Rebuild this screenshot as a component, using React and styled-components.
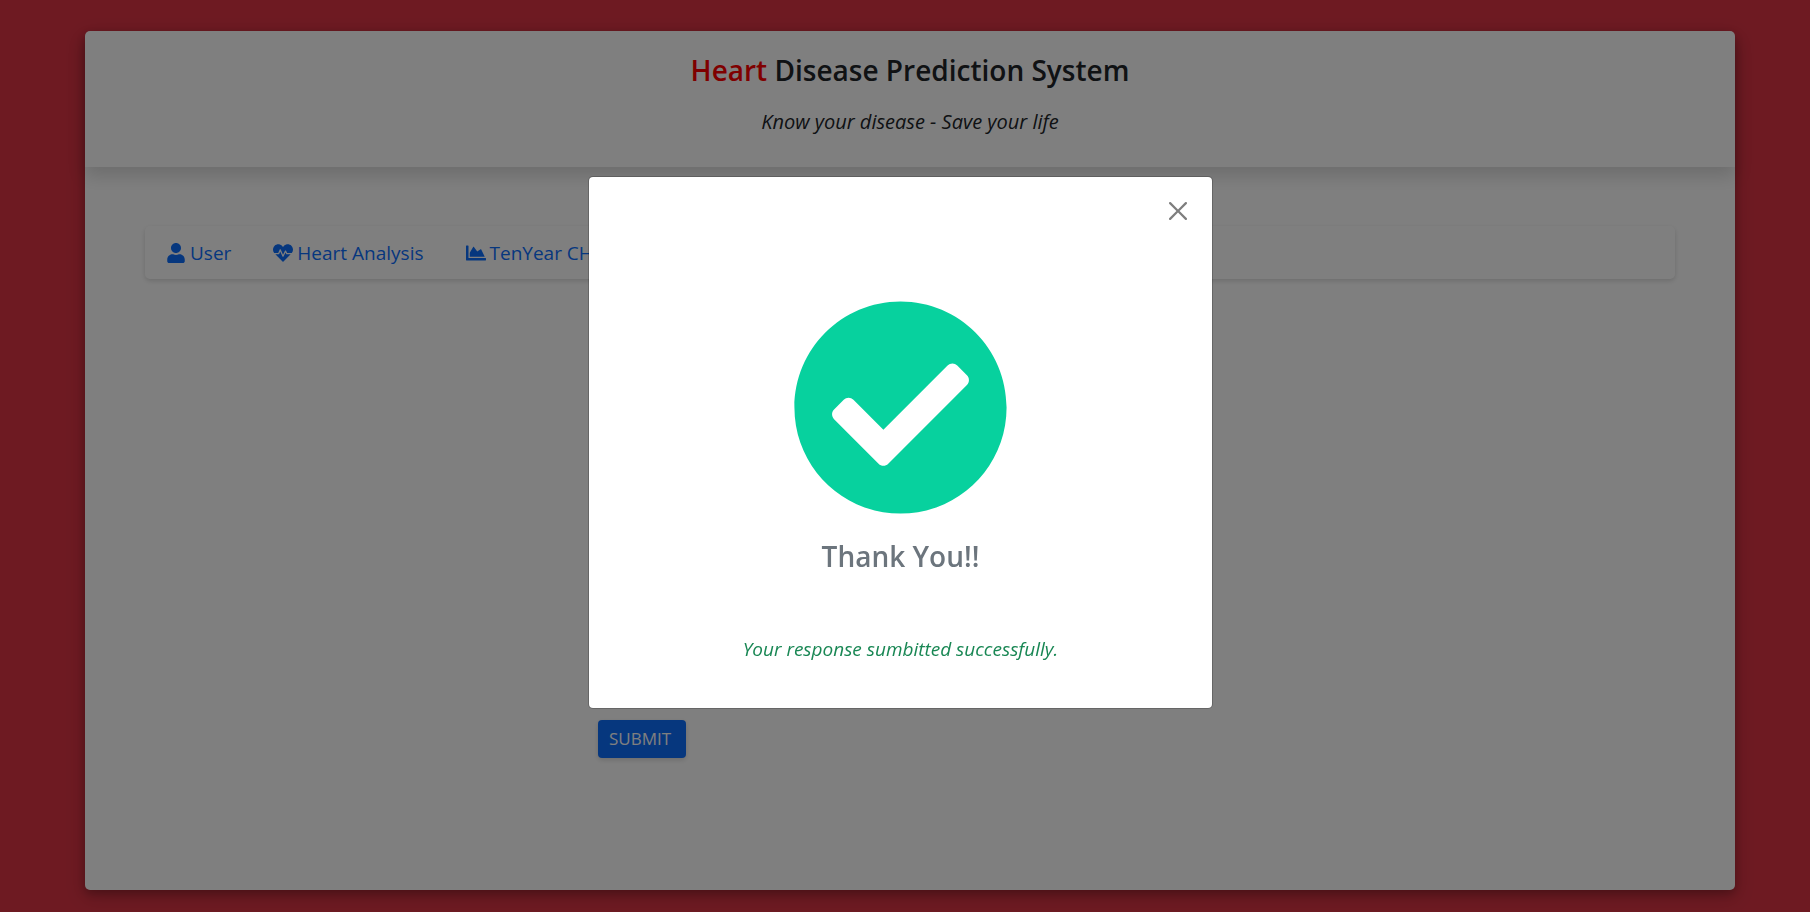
import React from "react";
import styled, { createGlobalStyle } from "styled-components";
import { FaUser, FaHeartbeat, FaChartArea, FaCheckCircle } from "react-icons/fa";

const GlobalStyle = createGlobalStyle`
  *, *::before, *::after { box-sizing: border-box; }
  body {
    margin: 0;
    background: #dc3545;
    color: #212529;
    font-family: "Segoe UI", "Open Sans", "Noto Sans", sans-serif;
    font-size: 19px;
    line-height: 28px;
  }
  h1, h2, p { margin: 0; }
`;

const Page = styled.div`
  min-height: 100vh;
  padding: 31px 75px 22px 85px;
`;

const Card = styled.main`
  min-height: calc(100vh - 53px);
  background: #fff;
  border-radius: 5px;
  box-shadow: 0 4px 8px rgba(0, 0, 0, 0.2), 0 6px 20px rgba(0, 0, 0, 0.19);
`;

const Header = styled.header`
  display: flex;
  flex-direction: column;
  align-items: center;
  gap: 18px;
  padding: 19px 20px 31px;
  border-radius: 5px 5px 0 0;
  box-shadow: 0 9px 18px rgba(0, 0, 0, 0.15);
`;

const Title = styled.h1`
  font-size: 28px;
  line-height: 40px;
  font-weight: 600;
`;

const Accent = styled.span`
  color: #ff0000;
`;

const Tagline = styled.p`
  font-size: 20px;
  font-style: italic;
`;

const Content = styled.div`
  padding: 59px 60px 132px;
`;

const Nav = styled.nav`
  display: flex;
  height: 53px;
  border-radius: 5px;
  box-shadow: 0 2px 5px rgba(0, 0, 0, 0.15);
`;

const NavLink = styled.a`
  display: flex;
  align-items: center;
  gap: 4px;
  padding: 0 21px;
  color: #0d6efd;
  text-decoration: none;
  white-space: nowrap;

  svg {
    width: auto;
    height: 20px;
  }
`;

const Form = styled.form`
  width: 100%;
  max-width: 624px;
  margin: 0 auto;
  padding-top: 441px;
`;

const SubmitButton = styled.button`
  display: block;
  height: 38px;
  padding: 0 15px 0 11px;
  border: 0;
  border-radius: 4px;
  background: #0d6efd;
  color: #fff;
  font: inherit;
  font-size: 17px;
  box-shadow: 0 2px 5px rgba(0, 0, 0, 0.15);
`;

const Backdrop = styled.div`
  position: fixed;
  inset: 0;
  display: flex;
  justify-content: center;
  align-items: flex-start;
  padding: 176px 9px 0 0;
  background: rgba(0, 0, 0, 0.5);
`;

const Dialog = styled.section`
  display: flex;
  flex-direction: column;
  align-items: center;
  width: 100%;
  max-width: 625px;
  padding: 20px 20px 45px;
  border: 1px solid rgba(0, 0, 0, 0.2);
  border-radius: 5px;
  background: #fff;
  background-clip: padding-box;
`;

const CloseButton = styled.button`
  display: flex;
  align-self: flex-end;
  margin: 0 0 73px;
  padding: 5px;
  border: 0;
  background: none;
  opacity: 0.5;
`;

const SuccessIcon = styled(FaCheckCircle)`
  width: 219px;
  height: 219px;
  color: #07d19e;
`;

const DialogTitle = styled.h2`
  margin-top: 19px;
  color: #6c757d;
  font-size: 28px;
  line-height: 40px;
  font-weight: 600;
`;

const Message = styled.p`
  margin-top: 59px;
  color: #198754;
  font-style: italic;
`;

const links = [
  { label: "User", Icon: FaUser },
  { label: "Heart Analysis", Icon: FaHeartbeat },
  { label: "TenYear CHD", Icon: FaChartArea },
];

export default function App() {
  return (
    <>
      <GlobalStyle />
      <Page>
        <Card>
          <Header>
            <Title>
              <Accent>Heart</Accent> Disease Prediction System
            </Title>
            <Tagline>Know your disease - Save your life</Tagline>
          </Header>
          <Content>
            <Nav>
              {links.map(({ label, Icon }) => (
                <NavLink key={label} href="#">
                  <Icon aria-hidden="true" />
                  {label}
                </NavLink>
              ))}
            </Nav>
            <Form onSubmit={(e) => e.preventDefault()}>
              <SubmitButton type="submit">SUBMIT</SubmitButton>
            </Form>
          </Content>
        </Card>
      </Page>
      <Backdrop>
        <Dialog role="dialog" aria-modal="true" aria-labelledby="dialog-title">
          <CloseButton type="button" aria-label="Close">
            <svg width="18" height="18" viewBox="0 0 16 16" aria-hidden="true">
              <path d="M.293.293a1 1 0 0 1 1.414 0L8 6.586 14.293.293a1 1 0 1 1 1.414 1.414L9.414 8l6.293 6.293a1 1 0 0 1-1.414 1.414L8 9.414l-6.293 6.293a1 1 0 0 1-1.414-1.414L6.586 8 .293 1.707a1 1 0 0 1 0-1.414z" />
            </svg>
          </CloseButton>
          <SuccessIcon aria-hidden="true" />
          <DialogTitle id="dialog-title">Thank You!!</DialogTitle>
          <Message>Your response sumbitted successfully.</Message>
        </Dialog>
      </Backdrop>
    </>
  );
}
